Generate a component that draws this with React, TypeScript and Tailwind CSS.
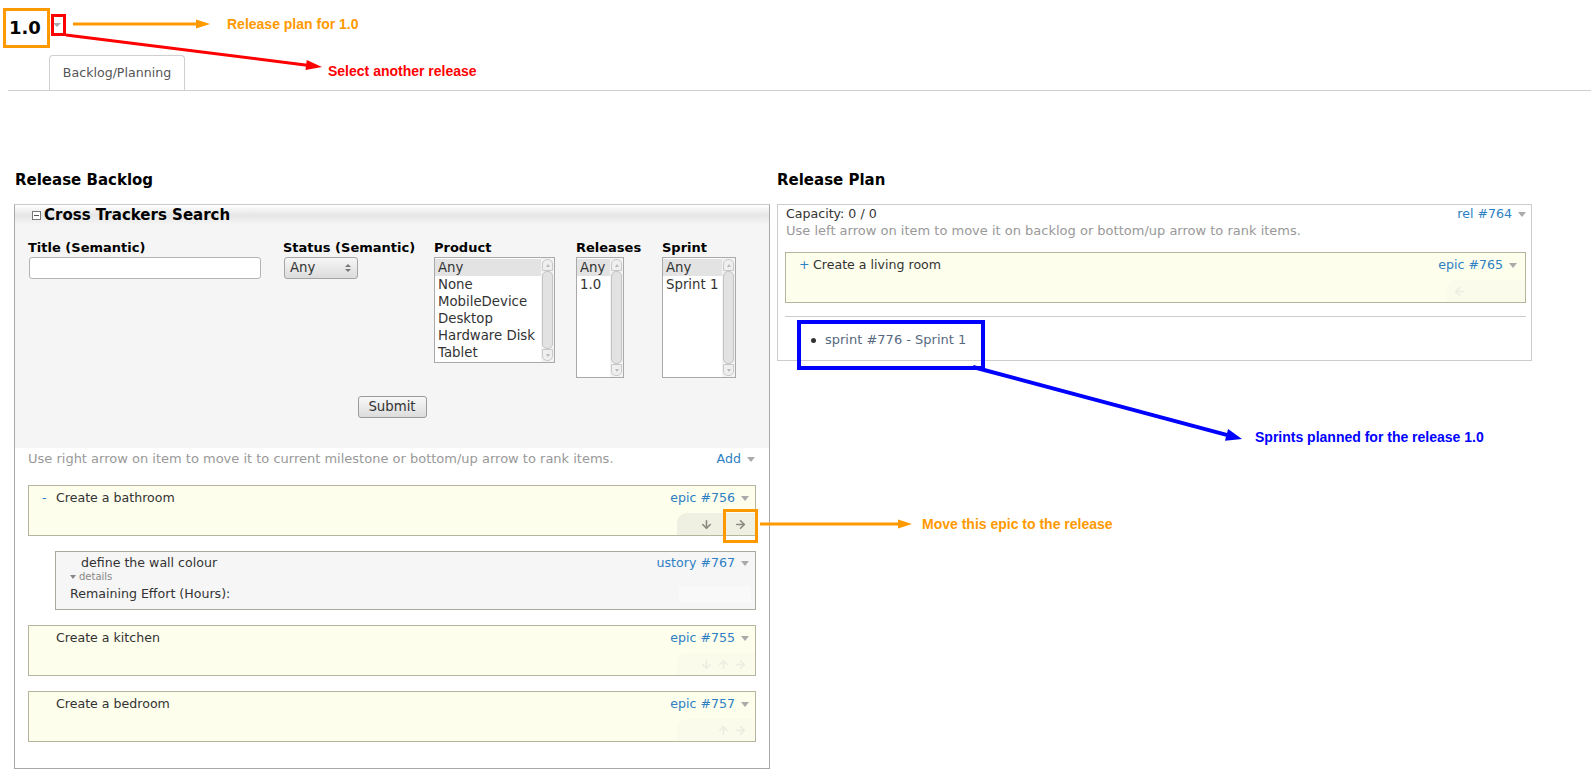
import { ArrowDown, ArrowUp, ArrowRight, ArrowLeft } from 'lucide-react'

const Caret = () => (
    <span className="inline-block w-0 h-0 border-x-[4px] border-x-transparent border-t-[5px] border-t-[#aaa]" />
)

function Arrow({ x1, y1, x2, y2, color, w, head, half }: { x1: number; y1: number; x2: number; y2: number; color: string; w: number; head: number; half: number }) {
    const len = Math.hypot(x2 - x1, y2 - y1)
    const ux = (x2 - x1) / len
    const uy = (y2 - y1) / len
    const bx = x2 - ux * head
    const by = y2 - uy * head
    const pts = `${x2},${y2} ${bx - uy * half},${by + ux * half} ${bx + uy * half},${by - ux * half}`
    return (
        <g>
            <line x1={x1} y1={y1} x2={bx + ux} y2={by + uy} stroke={color} strokeWidth={w} />
            <polygon points={pts} fill={color} />
        </g>
    )
}

function ScrollBar() {
    return (
        <div className="flex flex-col w-[13px] p-[1px] bg-[#f3f3f3]">
            <div className="h-[12px] flex items-center justify-center rounded-t-[5px] border border-[#c8c8c8] bg-[#efefef]">
                <span className="w-0 h-0 border-x-[2px] border-x-transparent border-b-[3px] border-b-[#bbb]" />
            </div>
            <div className="flex-1 rounded-[5px] border border-[#c4c4c4] bg-[#e2e2e2]" />
            <div className="h-[12px] flex items-center justify-center rounded-b-[5px] border border-[#c8c8c8] bg-[#efefef]">
                <span className="w-0 h-0 border-x-[2px] border-x-transparent border-t-[3px] border-t-[#bbb]" />
            </div>
        </div>
    )
}

function ListBox({ items, size }: { items: string[]; size: string }) {
    return (
        <div className={`flex border border-[#a9a9a9] bg-white ${size}`}>
            <div className="flex-1 flex flex-col pt-px text-[13.3px] leading-[17px] text-[#333]">
                {items.map((it, i) => (
                    <div key={it} className={i === 0 ? 'bg-[#e3e3e3] pl-[3px]' : 'pl-[3px]'}>{it}</div>
                ))}
            </div>
            <ScrollBar />
        </div>
    )
}

type Ic = 'down' | 'up' | 'right' | 'left' | null

function ActionBar({ icons, active }: { icons: Ic[]; active?: boolean }) {
    const color = active ? '#8a8a80' : '#ecece0'
    return (
        <div className={`flex justify-end items-center w-[78px] h-[22px] pr-[6px] rounded-tl-[10px] ${active ? 'bg-[#efefe2]' : 'bg-[#fbfbec]'}`}>
            {icons.map((ic, i) => (
                <span key={i} className="w-[17px] flex justify-center">
                    {ic === 'down' && <ArrowDown size={13} strokeWidth={3} color={color} />}
                    {ic === 'up' && <ArrowUp size={13} strokeWidth={3} color={color} />}
                    {ic === 'right' && <ArrowRight size={13} strokeWidth={3} color={color} />}
                    {ic === 'left' && <ArrowLeft size={13} strokeWidth={3} color={color} />}
                </span>
            ))}
        </div>
    )
}

function EpicCard({ title, id, dash, icons, active }: { title: string; id: string; dash?: string; icons: Ic[]; active?: boolean }) {
    return (
        <div className="h-[51px] border border-[#b5b59e] bg-[#fefeec] flex flex-col justify-between">
            <div className="flex justify-between items-center pt-[4px] pl-[13px] pr-[6px] text-[12.6px] leading-[16px]">
                <div className="flex">
                    <span className="w-[14px] text-[#2d7fc4]">{dash ?? ''}</span>
                    <span className="text-[#333]">{title}</span>
                </div>
                <div className="flex items-center gap-[6px]">
                    <span className="text-[#2d7fc4]">{id}</span>
                    <Caret />
                </div>
            </div>
            <div className="flex justify-end">
                <ActionBar icons={icons} active={active} />
            </div>
        </div>
    )
}

export default function App() {
    return (
        <div className="relative w-[1591px] h-[772px] overflow-hidden bg-white text-[#333] font-['DejaVu_Sans',sans-serif]">
            <div className="flex items-start pl-[9px] pt-[17px] h-[55px]">
                <span className="text-[18px] font-bold leading-[22px] text-black">1.0</span>
                <span className="ml-[12px] mt-[6px] w-0 h-0 border-x-[4px] border-x-transparent border-t-[4px] border-t-[#aaa]" />
            </div>

            <div className="ml-[8px] flex h-[36px] border-b border-[#cfcfcf] pl-[41px]">
                <div className="w-[136px] h-[35px] border border-b-0 border-[#cfcfcf] rounded-t-[4px] flex items-center justify-center text-[12.6px] text-[#555] bg-white">
                    Backlog/Planning
                </div>
            </div>

            <div className="flex pl-[14px] gap-[7px] mt-[80px]">
                <div className="w-[756px]">
                    <h2 className="pl-px text-[15px] font-bold leading-[18px] text-black mb-[15px]">Release Backlog</h2>
                    <div className="border border-[#a8a8a8] border-t-[#cccccc] pb-[26px]">
                        <div className="bg-[#f4f5f4] pb-[30px]">
                            <div className="h-[20px] flex items-center pl-[17px] bg-gradient-to-b from-white via-[#e6e6e6] to-[#f4f5f4]">
                                <span className="w-[9px] h-[9px] border border-[#777] flex items-center justify-center mr-[3px] bg-white">
                                    <span className="w-[5px] h-px bg-[#555]" />
                                </span>
                                <span className="text-[15px] font-bold leading-[18px] text-black">Cross Trackers Search</span>
                            </div>
                            <div className="flex pl-[13px] pt-[15px]">
                                <div className="w-[255px]">
                                    <div className="text-[13px] font-bold leading-[16px] text-black">Title (Semantic)</div>
                                    <div className="mt-px ml-px w-[232px] h-[22px] border border-[#b4b4b4] rounded-[3px] bg-white" />
                                </div>
                                <div className="w-[151px]">
                                    <div className="text-[13px] font-bold leading-[16px] text-black whitespace-nowrap">Status (Semantic)</div>
                                    <div className="mt-px ml-px w-[74px] h-[22px] border border-[#a6a6a6] rounded-[3px] bg-gradient-to-b from-[#f6f6f6] to-[#dcdcdc] flex items-center justify-between pl-[5px] pr-[6px] text-[13.3px] text-[#333]">
                                        <span>Any</span>
                                        <span className="flex flex-col gap-[2px]">
                                            <span className="w-0 h-0 border-x-[3px] border-x-transparent border-b-[3px] border-b-[#777]" />
                                            <span className="w-0 h-0 border-x-[3px] border-x-transparent border-t-[3px] border-t-[#777]" />
                                        </span>
                                    </div>
                                </div>
                                <div className="w-[142px]">
                                    <div className="text-[13px] font-bold leading-[16px] text-black">Product</div>
                                    <div className="mt-px">
                                        <ListBox items={['Any', 'None', 'MobileDevice', 'Desktop', 'Hardware Disk', 'Tablet']} size="w-[121px] h-[106px]" />
                                    </div>
                                </div>
                                <div className="w-[86px]">
                                    <div className="text-[13px] font-bold leading-[16px] text-black">Releases</div>
                                    <div className="mt-px">
                                        <ListBox items={['Any', '1.0']} size="w-[48px] h-[121px]" />
                                    </div>
                                </div>
                                <div>
                                    <div className="text-[13px] font-bold leading-[16px] text-black">Sprint</div>
                                    <div className="mt-px">
                                        <ListBox items={['Any', 'Sprint 1']} size="w-[74px] h-[121px]" />
                                    </div>
                                </div>
                            </div>
                            <div className="flex justify-center mt-[18px]">
                                <button className="w-[69px] h-[22px] border border-[#9a9a9a] rounded-[3px] bg-gradient-to-b from-[#f8f8f8] to-[#dcdcdc] text-[13.3px] text-[#333] leading-[20px]">Submit</button>
                            </div>
                        </div>

                        <div className="flex justify-between pl-[13px] pr-[14px] pt-[3px] text-[12.6px] leading-[16px]">
                            <span className="text-[13px] text-[#999]">Use right arrow on item to move it to current milestone or bottom/up arrow to rank items.</span>
                            <span className="flex items-center gap-[6px]">
                                <span className="text-[#2d7fc4]">Add</span>
                                <Caret />
                            </span>
                        </div>

                        <div className="mx-[13px] mt-[18px] flex flex-col gap-[15px]">
                            <EpicCard title="Create a bathroom" id="epic #756" dash="-" icons={['down', null, 'right']} active />
                            <div className="ml-[27px] h-[59px] border border-[#aaa99c] bg-[#f6f6f6] pt-[3px] pr-[6px] relative">
                                <div className="flex justify-between items-center pl-[25px] text-[12.6px] leading-[16px]">
                                    <span className="text-[#333]">define the wall colour</span>
                                    <span className="flex items-center gap-[6px]">
                                        <span className="text-[#2d7fc4]">ustory #767</span>
                                        <Caret />
                                    </span>
                                </div>
                                <div className="pl-[14px] flex items-center gap-[3px] text-[10px] leading-[14px] text-[#888] mt-[-1px]">
                                    <span className="w-0 h-0 border-x-[3px] border-x-transparent border-t-[4px] border-t-[#888]" />
                                    <span>details</span>
                                </div>
                                <div className="pl-[14px] text-[12.6px] leading-[16px] text-[#333] mt-[2px]">Remaining Effort (Hours):</div>
                                <div className="absolute right-[4px] bottom-[6px] w-[72px] h-[17px] bg-[#f9f9f9]" />
                            </div>
                            <EpicCard title="Create a kitchen" id="epic #755" icons={['down', 'up', 'right']} />
                            <EpicCard title="Create a bedroom" id="epic #757" icons={[null, 'up', 'right']} />
                        </div>
                    </div>
                </div>

                <div className="w-[755px]">
                    <h2 className="text-[15px] font-bold leading-[18px] text-black mb-[15px]">Release Plan</h2>
                    <div className="border border-[#cccccc] pb-[12px]">
                        <div className="flex justify-between items-center pl-[8px] pr-[5px] pt-px text-[12.6px] leading-[16px]">
                            <span className="text-[#333]">Capacity: 0 / 0</span>
                            <span className="flex items-center gap-[6px]">
                                <span className="text-[#2d7fc4]">rel #764</span>
                                <Caret />
                            </span>
                        </div>
                        <div className="pl-[8px] text-[13px] leading-[17px] text-[#999]">Use left arrow on item to move it on backlog or bottom/up arrow to rank items.</div>
                        <div className="ml-[7px] mr-[5px] mt-[13px]">
                            <div className="h-[51px] border border-[#b5b59e] bg-[#fefeec] flex flex-col justify-between">
                                <div className="flex justify-between items-center pt-[4px] pl-[13px] pr-[8px] text-[12.6px] leading-[16px]">
                                    <div className="flex">
                                        <span className="w-[14px] text-[#2d7fc4]">+</span>
                                        <span className="text-[#333]">Create a living room</span>
                                    </div>
                                    <div className="flex items-center gap-[6px]">
                                        <span className="text-[#2d7fc4]">epic #765</span>
                                        <Caret />
                                    </div>
                                </div>
                                <div className="flex justify-end">
                                    <ActionBar icons={['left', null, null, null]} />
                                </div>
                            </div>
                            <div className="mt-[13px] border-t border-[#cccccc] pt-[15px] flex items-center pl-[26px] text-[13px] leading-[16px]">
                                <span className="w-[5px] h-[5px] rounded-full bg-[#333] mr-[9px]" />
                                <span className="text-[#56697f]">sprint #776 - Sprint 1</span>
                            </div>
                        </div>
                    </div>
                </div>
            </div>

            {/* annotations */}
            <svg className="absolute inset-0 pointer-events-none" width={1591} height={772}>
                <Arrow x1={73} y1={24} x2={210} y2={24} color="#ff9900" w={3} head={14} half={4.5} />
                <Arrow x1={66} y1={35} x2={322} y2={67} color="#ff0000" w={3} head={16} half={5} />
                <Arrow x1={760} y1={524} x2={912} y2={524} color="#ff9900" w={3} head={14} half={4.5} />
                <Arrow x1={973} y1={367} x2={1242} y2={439} color="#0000ff" w={4} head={16} half={6} />
            </svg>
            <div className="absolute left-[3px] top-[8px] w-[47px] h-[40px] border-[3px] border-[#ff9900]" />
            <div className="absolute left-[51px] top-[14px] w-[15px] h-[22px] border-[3px] border-[#ff0000]" />
            <div className="absolute left-[723px] top-[509px] w-[35px] h-[34px] border-[3px] border-[#ff9900]" />
            <div className="absolute left-[797px] top-[320px] w-[188px] h-[50px] border-[4px] border-[#0000ff]" />
            <div className="absolute left-[227px] top-[16px] font-['Liberation_Sans',Arial,sans-serif] text-[14px] font-bold leading-[16px] text-[#ff9900]">Release plan for 1.0</div>
            <div className="absolute left-[328px] top-[63px] font-['Liberation_Sans',Arial,sans-serif] text-[14px] font-bold leading-[16px] text-[#ff0000]">Select another release</div>
            <div className="absolute left-[922px] top-[516px] font-['Liberation_Sans',Arial,sans-serif] text-[14px] font-bold leading-[16px] text-[#ff9900]">Move this epic to the release</div>
            <div className="absolute left-[1255px] top-[429px] font-['Liberation_Sans',Arial,sans-serif] text-[14px] font-bold leading-[16px] text-[#0000ff]">Sprints planned for the release 1.0</div>
        </div>
    )
}
